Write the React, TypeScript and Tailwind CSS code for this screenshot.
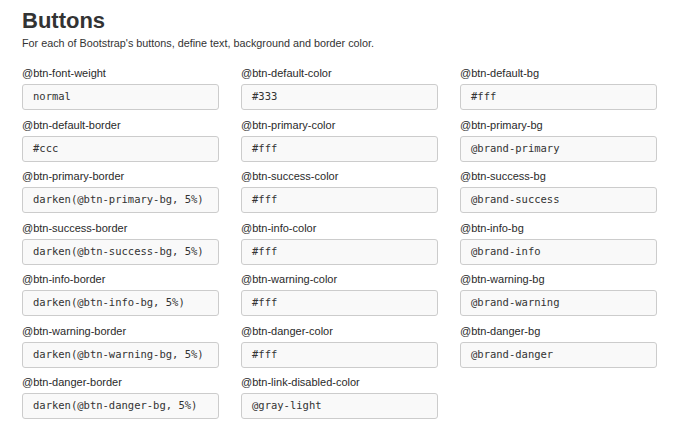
const vars: [string, string][] = [
  ['@btn-font-weight', 'normal'],
  ['@btn-default-color', '#333'],
  ['@btn-default-bg', '#fff'],
  ['@btn-default-border', '#ccc'],
  ['@btn-primary-color', '#fff'],
  ['@btn-primary-bg', '@brand-primary'],
  ['@btn-primary-border', 'darken(@btn-primary-bg, 5%)'],
  ['@btn-success-color', '#fff'],
  ['@btn-success-bg', '@brand-success'],
  ['@btn-success-border', 'darken(@btn-success-bg, 5%)'],
  ['@btn-info-color', '#fff'],
  ['@btn-info-bg', '@brand-info'],
  ['@btn-info-border', 'darken(@btn-info-bg, 5%)'],
  ['@btn-warning-color', '#fff'],
  ['@btn-warning-bg', '@brand-warning'],
  ['@btn-warning-border', 'darken(@btn-warning-bg, 5%)'],
  ['@btn-danger-color', '#fff'],
  ['@btn-danger-bg', '@brand-danger'],
  ['@btn-danger-border', 'darken(@btn-danger-bg, 5%)'],
  ['@btn-link-disabled-color', '@gray-light'],
];

export default function App() {
  return (
    <div className="min-h-screen bg-white px-[22px] pt-[7px] text-[#333] font-['Helvetica_Neue','Liberation_Sans',Arial,sans-serif]">
      <h1 className="text-[22px] leading-[28px] font-bold">Buttons</h1>
      <p className="text-[10.8px] leading-[15px] mt-[1px]">
        For each of Bootstrap's buttons, define text, background and border color.
      </p>

      <div className="mt-[15px] grid grid-cols-[197px_197px_197px] gap-x-[22px] gap-y-[7.5px]">
        {vars.map(([name, value]) => (
          <div key={name}>
            <label className="block text-[11px] leading-[15px] mb-[3px] text-[#2a2a2a]">{name}</label>
            <div className="h-[26px] flex items-center px-[10px] bg-[#f9f9f9] border border-[#ccc] rounded-[3px] text-[10.5px] whitespace-nowrap font-['DejaVu_Sans_Mono',monospace] text-[#333]">
              {value}
            </div>
          </div>
        ))}
      </div>
    </div>
  );
}
